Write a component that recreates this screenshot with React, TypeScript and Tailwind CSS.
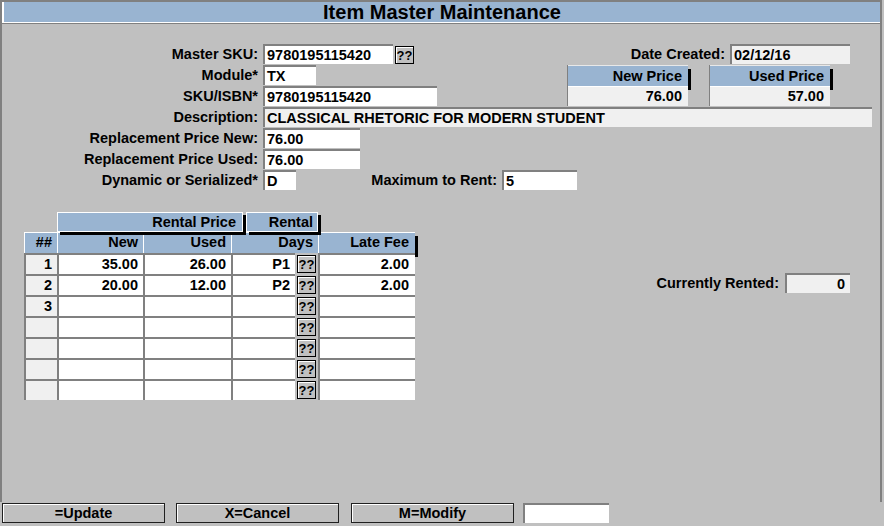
import React from 'react';

type FieldProps = {
  value?: string;
  w: string;
  ro?: boolean;
  right?: boolean;
};

function Field({ value = '', w, ro = false, right = false }: FieldProps) {
  return (
    <div
      className={`${w} h-[20px] border-t-2 border-l-2 border-[#808080] ${ro ? 'bg-[#f0f0f0]' : 'bg-white'} flex items-center px-[2px] text-[14.5px] font-bold leading-none whitespace-nowrap ${right ? 'justify-end pr-[5px]' : ''}`}
    >
      {value}
    </div>
  );
}

function Lookup() {
  return (
    <div className="w-[19px] h-[18px] bg-[#c0c0c0] border border-black shadow-[inset_1px_1px_0_#fff] flex items-center justify-center text-[13px] font-bold leading-none">
      ??
    </div>
  );
}

function Row({ label, children }: { label: string; children: React.ReactNode }) {
  return (
    <div className="flex h-[21px] items-start">
      <div className="w-[256px] text-right text-[14.5px] font-bold leading-[20px] whitespace-nowrap">{label}</div>
      <div className="ml-[5px] flex items-start">{children}</div>
    </div>
  );
}

function PriceBox({ title, value }: { title: string; value: string }) {
  return (
    <div className="w-[121px] border-l border-[#808080]">
      <div className="h-[21px] bg-[#99b4d1] border-t border-[#e8e8e8] shadow-[3px_4px_0_0_#000] text-right pr-[6px] text-[14.5px] font-bold leading-[20px]">
        {title}
      </div>
      <div className="h-[20px] bg-[#f0f0f0] border-t border-white text-right pr-[6px] text-[14.5px] font-bold leading-[19px]">
        {value}
      </div>
    </div>
  );
}

const rows = [
  ['1', '35.00', '26.00', 'P1', '2.00'],
  ['2', '20.00', '12.00', 'P2', '2.00'],
  ['3', '', '', '', ''],
  ['', '', '', '', ''],
  ['', '', '', '', ''],
  ['', '', '', '', ''],
  ['', '', '', '', ''],
];

const cell = 'h-[21px] border-t-2 border-l-2 border-[#808080] text-right pr-[5px] text-[14.5px] font-bold leading-[18px]';
const head = 'h-[21px] bg-[#99b4d1] border-t border-l border-white text-right pr-[5px] text-[14.5px] font-bold leading-[19px]';

export default function App() {
  return (
    <div className="w-[884px] h-[526px] bg-[#c0c0c0] text-black font-['Liberation_Sans',Arial,sans-serif] overflow-hidden">
      {/* Frame */}
      <div className="w-[882px] h-[502px] border-t-2 border-l-2 border-r-2 border-[#808080]">
        {/* Title */}
        <div className="h-[21px] bg-[#99b4d1] border-l-2 border-b border-white text-center text-[20px] font-bold leading-[20px]">
          Item Master Maintenance
        </div>
        <div className="h-px bg-[#808080]" />

        <div className="pt-[20px]">
          {/* Top section */}
          <div className="flex">
            <div className="w-[565px]">
              <Row label="Master SKU:">
                <Field w="w-[130px]" value="9780195115420" />
                <div className="ml-[2px] mt-[2px]">
                  <Lookup />
                </div>
              </Row>
              <Row label="Module*">
                <Field w="w-[53px]" value="TX" />
              </Row>
              <Row label="SKU/ISBN*">
                <Field w="w-[174px]" value="9780195115420" />
              </Row>
            </div>
            <div className="w-[283px]">
              <div className="flex h-[21px] items-start justify-end">
                <div className="text-[14.5px] font-bold leading-[20px]">Date Created:</div>
                <div className="ml-[5px]">
                  <Field w="w-[120px]" value="02/12/16" ro />
                </div>
              </div>
              <div className="flex">
                <PriceBox title="New Price" value="76.00" />
                <div className="ml-[21px]">
                  <PriceBox title="Used Price" value="57.00" />
                </div>
              </div>
            </div>
          </div>

          <Row label="Description:">
            <Field w="w-[609px]" value="CLASSICAL RHETORIC FOR MODERN STUDENT" ro />
          </Row>
          <Row label="Replacement Price New:">
            <Field w="w-[97px]" value="76.00" />
          </Row>
          <Row label="Replacement Price Used:">
            <Field w="w-[97px]" value="76.00" />
          </Row>
          <Row label="Dynamic or Serialized*">
            <Field w="w-[33px]" value="D" />
            <div className="w-[201px] text-right text-[14.5px] font-bold leading-[20px] whitespace-nowrap">Maximum to Rent:</div>
            <div className="ml-[5px]">
              <Field w="w-[75px]" value="5" />
            </div>
          </Row>

          {/* Rental table */}
          <div className="flex mt-[21px]">
            <div className="ml-[22px]">
              <div className="relative z-10 flex h-[20px] ml-[33px]">
                <div className="w-[186px] h-[20px] bg-[#99b4d1] border border-white shadow-[3px_3px_0_0_#000] text-right pr-[6px] text-[14.5px] font-bold leading-[18px]">
                  Rental Price
                </div>
                <div className="ml-[3px] w-[72px] h-[20px] bg-[#99b4d1] border border-white shadow-[3px_3px_0_0_#000] text-right pr-[4px] text-[14.5px] font-bold leading-[18px]">
                  Rental
                </div>
              </div>
              <div className="flex">
                <div className={`${head} w-[33px] pr-[4px]`}>##</div>
                <div className={`${head} w-[86px]`}>New</div>
                <div className={`${head} w-[88px]`}>Used</div>
                <div className={`${head} w-[87px]`}>Days</div>
                <div className={`${head} w-[97px] pr-[6px] shadow-[3px_4px_0_0_#000]`}>Late Fee</div>
              </div>
              {rows.map((r, i) => (
                <div key={i} className="flex">
                  <div className={`${cell} w-[33px] bg-[#f0f0f0] pr-[4px]`}>{r[0]}</div>
                  <div className={`${cell} w-[86px] bg-white`}>{r[1]}</div>
                  <div className={`${cell} w-[88px] bg-white`}>{r[2]}</div>
                  <div className={`${cell} w-[64px] bg-white`}>{r[3]}</div>
                  <div className="w-[23px] h-[21px] flex items-center justify-center pt-[1px]">
                    <Lookup />
                  </div>
                  <div className={`${cell} w-[97px] bg-white pr-[6px]`}>{r[4]}</div>
                </div>
              ))}
            </div>
            <div className="flex-1 flex justify-end items-start pr-[30px] mt-[61px]">
              <div className="text-[14.5px] font-bold leading-[20px]">Currently Rented:</div>
              <div className="ml-[6px]">
                <Field w="w-[65px]" value="0" ro right />
              </div>
            </div>
          </div>
        </div>
      </div>

      {/* Command buttons */}
      <div className="flex pt-[1px]">
        <button className="ml-[2px] w-[163px] h-[20px] bg-[#c0c0c0] border border-[#202020] shadow-[inset_1px_1px_0_#fff] text-[14.5px] font-bold leading-none">
          =Update
        </button>
        <button className="ml-[11px] w-[163px] h-[20px] bg-[#c0c0c0] border border-[#202020] shadow-[inset_1px_1px_0_#fff] text-[14.5px] font-bold leading-none">
          X=Cancel
        </button>
        <button className="ml-[12px] w-[163px] h-[20px] bg-[#c0c0c0] border border-[#202020] shadow-[inset_1px_1px_0_#fff] text-[14.5px] font-bold leading-none">
          M=Modify
        </button>
        <div className="ml-[9px] w-[86px] h-[20px] bg-white border-t-2 border-l-2 border-[#808080]" />
      </div>
    </div>
  );
}
